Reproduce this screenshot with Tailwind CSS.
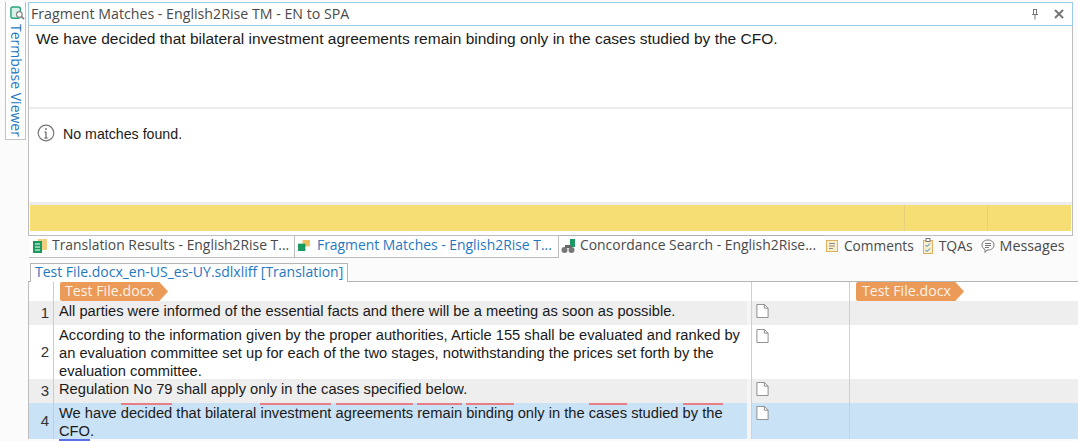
<!DOCTYPE html>
<html><head><meta charset="utf-8"><script src="https://cdn.jsdelivr.net/npm/@tailwindcss/browser@4"></script></head>
<body class="w-[1078px] h-[441px] overflow-hidden bg-[#fbfbfb] font-['Open_Sans',sans-serif] text-[#4a4a4a]">
<div class="flex h-[236px]">
  <div class="w-[28px] pt-[2px] pl-[5px]">
    <div class="w-[21px] h-[138px] bg-white border-x border-b border-[#c4c4c4] flex flex-col items-center">
      <svg class="w-[15px] h-[15px] mt-[4px] ml-[3px] shrink-0" viewBox="0 0 16 16" fill="none"><rect x="1" y="1" width="10" height="12" rx="2" fill="#d8f0e6" stroke="#22a57a" stroke-width="1.500"/><circle cx="10" cy="9" r="3" fill="#fff" stroke="#888" stroke-width="1.300"/><path d="M12 11l3 3" stroke="#777" stroke-width="1.600"/></svg>
      <span class="[writing-mode:vertical-rl] text-[14px] leading-[19px] text-[#1f78c1] mt-[3px] ml-[1px]">Termbase Viewer</span>
    </div>
  </div>
  <div class="w-[1045px] border-x border-b border-[#bdbdbd] bg-white flex flex-col mt-[2px] h-[234px]">
    <div class="h-[24px] -mx-px border border-[#9ccbe6] flex items-center justify-between pl-[2px] pr-[8px] text-[14.200px]">
      <span>Fragment Matches - English2Rise TM - EN to SPA</span>
      <div class="flex items-center gap-[14px]">
        <svg class="w-[10px] h-[11px]" viewBox="0 0 10 11" fill="none" stroke="#777"><path d="M3 .5h4M3.500 .5v5M6.500 .5v5M2 5.500h6M5 5.500v5"/></svg>
        <svg class="w-[10px] h-[10px]" viewBox="0 0 10 10" stroke="#777" stroke-width="2"><path d="M1 1l8 8M9 1l-8 8"/></svg>
      </div>
    </div>
    <div class="h-[81px] px-[7px] pt-[3px] font-['Liberation_Sans',sans-serif] text-[15.500px] leading-[20px] text-[#1a1a1a]">We have decided that bilateral investment agreements remain binding only in the cases studied by the CFO.</div>
    <div class="h-[98px] border-t-2 border-b-[3px] border-[#ededed] flex items-start pl-[8px] pt-[15px] gap-[8px] text-[#1a1a1a]">
      <svg class="w-[18px] h-[18px] shrink-0" viewBox="0 0 18 18" fill="none"><circle cx="9" cy="9" r="7.800" stroke="#777" stroke-width="1.200"/><path d="M9 4v2M9 8v6M7.500 14h3M7.500 8H9" stroke="#777" stroke-width="1.400"/></svg>
      <span class="font-['Liberation_Sans',sans-serif] text-[14.200px] leading-[20px]">No matches found.</span>
    </div>
    <div class="h-[26px] ml-px mr-[1px] bg-[#f6de74] flex">
      <div class="w-[874px]"></div><div class="w-[83px] border-l border-[#e6d080]"></div><div class="flex-1 border-l border-[#e6d080]"></div>
    </div>
  </div>
</div>
<div class="h-[22px] flex items-start text-[13.900px]">
  <div class="ml-[29px] w-[266px] h-[22px] flex items-center gap-[5px] pl-[4px] pb-[2px] bg-white border-r border-b border-[#bdbdbd] shrink-0">
    <svg class="w-[14px] h-[14px] shrink-0" viewBox="0 0 14 14"><rect x="5" y="0" width="9" height="11" fill="#f0d080"/><rect x="0" y="2" width="9" height="12" fill="#1a9a60"/><path d="M2 5h5M2 8h5M2 11h5" stroke="#fff"/></svg>
    <span class="whitespace-nowrap">Translation Results - English2Rise T...</span>
  </div>
  <div class="w-[264px] h-[22px] flex items-center gap-[7px] pl-[3px] pb-[2px] bg-white border-r border-b border-[#bdbdbd] shrink-0 text-[#1f78c1]">
    <svg class="w-[12px] h-[11px] shrink-0" viewBox="0 0 13 12"><rect x="5" y="0" width="8" height="7" fill="#f0c060"/><rect x="0" y="4" width="8" height="8" fill="#1a9a60"/></svg>
    <span class="whitespace-nowrap">Fragment Matches - English2Rise T...</span>
  </div>
  <div class="flex items-center h-[22px] pl-[2px] pb-[2px] -mt-[1px] border-t border-[#b0b0b0] gap-[4px] w-[265px] shrink-0 bg-gradient-to-b from-white to-[#fbfbfb]">
    <svg class="w-[15px] h-[16px] shrink-0" viewBox="0 0 15 16"><circle cx="3.500" cy="12" r="3" fill="#777"/><circle cx="10.500" cy="12" r="3" fill="#777"/><rect x="9" y="1" width="5" height="8" fill="#1a9a60"/><rect x="4" y="7" width="6" height="3" fill="#666"/></svg>
    <span class="whitespace-nowrap">Concordance Search - English2Rise...</span>
  </div>
  <div class="flex items-center h-[22px] gap-[6px] ml-[2px] pb-[2px]">
    <svg class="w-[12px] h-[12px] shrink-0" viewBox="0 0 12 12" fill="#fbeecb" stroke="#e0b060"><rect x=".5" y=".5" width="11" height="11"/><path d="M3 3.500h6M3 6h6M3 8.500h4" stroke="#888"/></svg>
    <span class="text-[13.700px]">Comments</span>
    <svg class="w-[10px] h-[16px] shrink-0 ml-[3px]" viewBox="0 0 10 16" fill="#fbeecb" stroke="#e0b060"><rect x=".5" y="2.500" width="9" height="13"/><rect x="3" y=".5" width="4" height="3" fill="#fff" stroke="#777"/><path d="M2.500 7l1.500 1.500 3-3M2.500 12l1.500 1.500 3-3" stroke="#2a80c8" fill="none"/></svg>
    <span>TQAs</span>
    <svg class="w-[14px] h-[14px] shrink-0 ml-[2px]" viewBox="0 0 14 14" fill="none" stroke="#777"><path d="M7 1c3.500 0 6 2 6 5s-2.500 5-6 5l-1 0-2 2.500 0-3C2 9.500 1 8 1 6c0-3 2.500-5 6-5z"/><path d="M4 4.500h6M4 6.500h6M4 8.500h4"/></svg>
    <span class="text-[14.300px] -ml-[1px]">Messages</span>
  </div>
</div>
<div class="h-[24px] flex items-end">
  <div class="ml-[28px] w-[2px] border-b border-[#b5b5b5]"></div>
  <div class="h-[19px] w-[318px] bg-white border-x border-t border-[#b5b5b5] text-[14px] text-[#1f78c1] pl-[4px] leading-[16px] whitespace-nowrap">Test File.docx_en-US_es-UY.sdlxliff [Translation]</div>
  <div class="flex-1 border-b border-[#b5b5b5]"></div>
</div>
<div class="ml-[28px] bg-white border-l border-[#bdbdbd] font-['Liberation_Sans',sans-serif] text-[14.700px] leading-[18px] text-[#1a1a1a] grid grid-cols-[25px_693px_1fr]">
  <div class="h-[19px] border-r border-[#ccc]"></div>
  <div class="h-[19px] flex items-end pl-[6px]"><div class="h-[19px] w-[108px] bg-[#ec9a58] text-[#fdf3e8] font-['Open_Sans',sans-serif] text-[14.200px] leading-[18px] pl-[5px] rounded-l-[2px] [clip-path:polygon(0_0,92%_0,100%_50%,92%_100%,0_100%)]">Test File.docx</div></div>
  <div class="h-[19px] pl-[4px] flex"><div class="w-[99px] border-x border-[#d0d0d0]"></div><div class="ml-[6px] h-[19px] w-[108px] bg-[#ec9a58] text-[#fdf3e8] font-['Open_Sans',sans-serif] text-[14.200px] leading-[18px] pl-[6px] rounded-l-[2px] [clip-path:polygon(0_0,92%_0,100%_50%,92%_100%,0_100%)]">Test File.docx</div></div>

  <div class="h-[24px] bg-[#eeeeee] border-r border-[#ccc] flex items-center justify-end pr-[4px] text-[15px] text-[#333]">1</div>
  <div class="h-[24px] bg-[#eeeeee] pl-[5px] pt-[1px]">All parties were informed of the essential facts and there will be a meeting as soon as possible.</div>
  <div class="h-[24px] pl-[4px] flex bg-[#f5f5f5]"><div class="w-[99px] bg-[#eeeeee] border-x border-[#d0d0d0] pl-[4px] pt-[3px]"><svg class="w-[13px] h-[14px]" viewBox="0 0 13 15" fill="#fff" stroke="#888"><path d="M.5.5h8l4 4v10H.5z"/><path d="M8.500.5v4h4" fill="none"/></svg></div><div class="flex-1 bg-[#eeeeee]"></div></div>

  <div class="h-[54px] bg-white border-r border-[#ccc] flex items-center justify-end pr-[4px] text-[15px] text-[#333]">2</div>
  <div class="h-[54px] bg-white pl-[5px] pt-[1px]">According to the information given by the proper authorities, Article 155 shall be evaluated and ranked by an evaluation committee set up for each of the two stages, notwithstanding the prices set forth by the evaluation committee.</div>
  <div class="h-[54px] pl-[4px] flex bg-white"><div class="w-[99px] border-x border-[#d0d0d0] pl-[4px] pt-[4px]"><svg class="w-[13px] h-[14px]" viewBox="0 0 13 15" fill="#fff" stroke="#888"><path d="M.5.5h8l4 4v10H.5z"/><path d="M8.500.5v4h4" fill="none"/></svg></div></div>

  <div class="h-[24px] bg-[#eeeeee] border-r border-[#ccc] flex items-center justify-end pr-[4px] text-[15px] text-[#333]">3</div>
  <div class="h-[24px] bg-[#eeeeee] pl-[5px] pt-[1px]">Regulation No 79 shall apply only in the cases specified below.</div>
  <div class="h-[24px] pl-[4px] flex bg-[#f5f5f5]"><div class="w-[99px] bg-[#eeeeee] border-x border-[#d0d0d0] pl-[4px] pt-[3px]"><svg class="w-[13px] h-[14px]" viewBox="0 0 13 15" fill="#fff" stroke="#888"><path d="M.5.5h8l4 4v10H.5z"/><path d="M8.500.5v4h4" fill="none"/></svg></div><div class="flex-1 bg-[#eeeeee]"></div></div>

  <div class="h-[36px] bg-[#cae2f5] border-r border-[#ccc] flex items-center justify-end pr-[4px] text-[15px] text-[#333]">4</div>
  <div class="h-[36px] bg-[#cae2f5] pl-[5px] pt-[1px]">We have <span class="border-t-2 border-[#e57f85]">decided</span> that bilateral <span class="border-t-2 border-[#e57f85]">investment</span> <span class="border-t-2 border-[#e57f85]">agreements</span> <span class="border-t-2 border-[#e57f85]">remain</span> <span class="border-t-2 border-[#e57f85]">binding</span> only in the <span class="border-t-2 border-[#e57f85]">cases</span> studied <span class="border-t-2 border-[#e57f85]">by the</span> <span class="border-b-2 border-[#5a6ee8]">CFO</span>.</div>
  <div class="h-[36px] pl-[4px] flex bg-[#f5f5f5]"><div class="w-[99px] bg-[#cae2f5] border-x border-[#d0d0d0] pl-[4px] pt-[3px] flex-none"><svg class="w-[13px] h-[14px]" viewBox="0 0 13 15" fill="#fff" stroke="#888"><path d="M.5.5h8l4 4v10H.5z"/><path d="M8.500.5v4h4" fill="none"/></svg></div><div class="flex-1 bg-[#cae2f5]"></div></div>
</div>
</body></html>
